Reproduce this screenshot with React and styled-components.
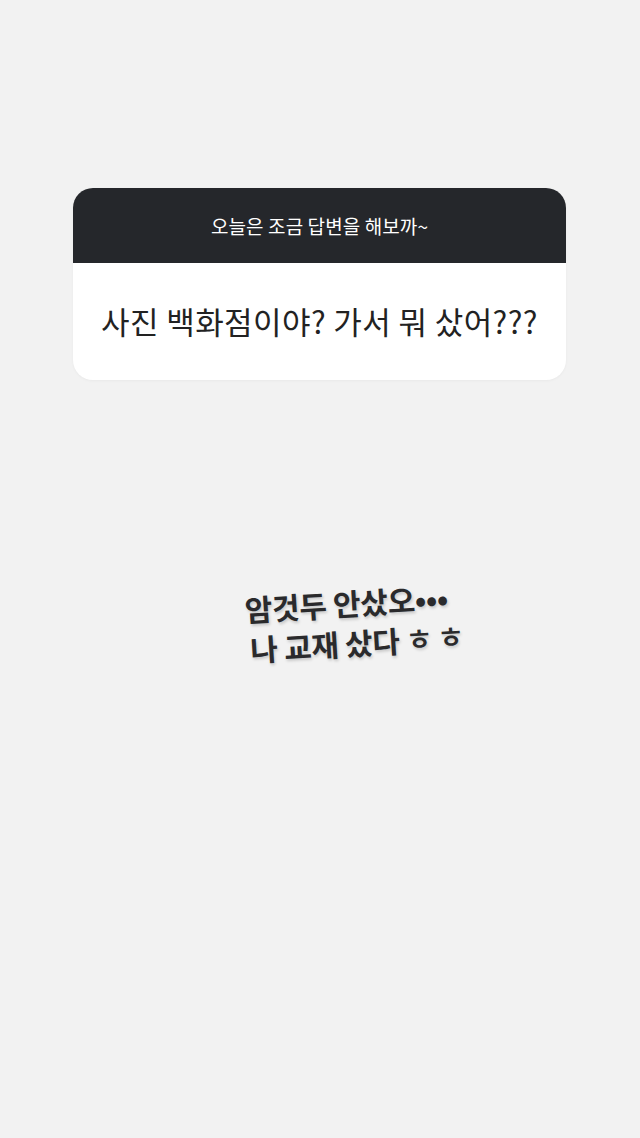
import React from "react";
import styled, { createGlobalStyle } from "styled-components";

const Global = createGlobalStyle`
  html, body { margin: 0; padding: 0; background: #f2f2f2; }
  body { font-family: "Noto Sans CJK KR", "Noto Sans", sans-serif; }
`;

const Page = styled.div`
  min-height: 1138px;
  display: flex;
  flex-direction: column;
  padding: 188px 74px 0 73px;
  box-sizing: border-box;
`;

const Card = styled.div`
  border-radius: 20px;
  overflow: hidden;
  background: #ffffff;
  box-shadow: 0 1px 3px rgba(0,0,0,0.04);
`;

const Header = styled.div`
  height: 75px;
  background: #25272b;
  color: #ffffff;
  display: flex;
  align-items: center;
  justify-content: center;
  font-size: 19px;
  font-weight: 400;
  letter-spacing: 0.1px;
`;

const Question = styled.div`
  height: 117px;
  display: flex;
  align-items: center;
  justify-content: center;
  font-size: 31px;
  color: #222222;
  letter-spacing: 0.4px;
  padding-bottom: 2px;
  box-sizing: border-box;
`;

const Sticker = styled.div`
  margin: 210px 0 0 173px;
  transform: rotate(-3.5deg);
  transform-origin: left center;
  color: #2a2a2c;
  font-weight: 700;
  font-size: 30px;
  line-height: 39px;
  text-shadow: 1px 2px 3px rgba(0,0,0,0.18);
  letter-spacing: -0.3px;
`;

const Line = styled.div`
  white-space: nowrap;
  padding-left: ${p => p.$indent || 0}px;
`;

const Small = styled.span`
  font-size: 30px;
  font-weight: 500;
  margin-left: 6px;
  letter-spacing: 4px;
  vertical-align: 1px;
`;

export default function App() {
  return (
    <>
      <Global />
      <Page>
        <Card>
          <Header>오늘은 조금 답변을 해보까~</Header>
          <Question>사진 백화점이야? 가서 뭐 샀어???</Question>
        </Card>
        <Sticker>
          <Line>암것두 안샀오•••</Line>
          <Line $indent={3}>나 교재 샀다<Small>ㅎㅎ</Small></Line>
        </Sticker>
      </Page>
    </>
  );
}
